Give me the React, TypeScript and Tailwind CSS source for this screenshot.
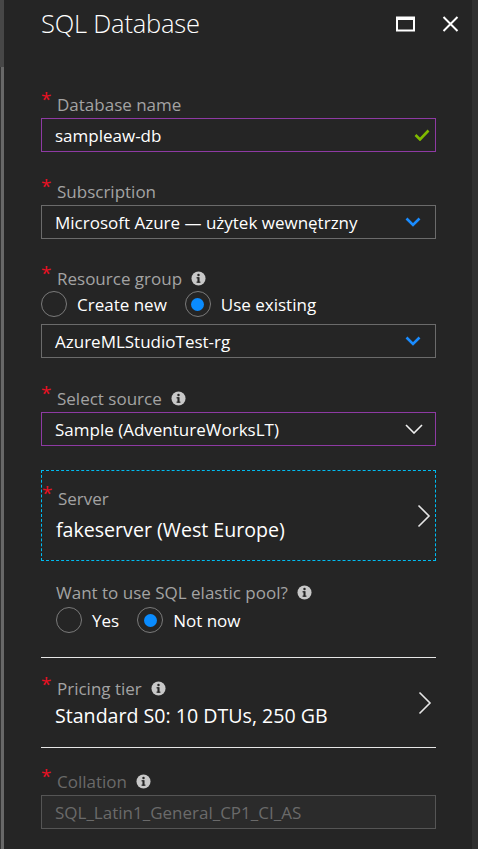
import type { ReactNode } from "react";

const font = { fontFamily: '"Open Sans", "Noto Sans", sans-serif' };

const Star = () => (
  <span className="w-[16px] shrink-0 self-start leading-none text-[19px] text-[#e81123] -mt-[3px]">*</span>
);

const Info = () => (
  <svg width="15" height="15" viewBox="0 0 16 16" className="ml-[9px] shrink-0">
    <circle cx="8" cy="8" r="7.5" fill="#c8c8c8" />
    <rect x="6.9" y="6.6" width="2.2" height="5.8" fill="#252525" />
    <rect x="5.9" y="6.6" width="2" height="1.3" fill="#252525" />
    <rect x="5.9" y="11.3" width="4.2" height="1.2" fill="#252525" />
    <circle cx="8" cy="4.3" r="1.3" fill="#252525" />
  </svg>
);

const Label = ({ children, info, dim }: { children: ReactNode; info?: boolean; dim?: boolean }) => (
  <div className="flex items-center h-[22px]">
    <Star />
    <span className={`text-[17px] leading-none ${dim ? "text-[#6a6a6a]" : "text-[#a3a3a3]"}`}>{children}</span>
    {info && <Info />}
  </div>
);

const BlueChevron = () => (
  <svg width="16" height="10" viewBox="0 0 16 10" className="mr-[1px]">
    <path d="M1.5 1.5 L8 8 L14.5 1.5" fill="none" stroke="#1a8cff" strokeWidth="2.6" />
  </svg>
);

const WhiteChevron = () => (
  <svg width="18" height="10" viewBox="0 0 18 10">
    <path d="M1 1 L9 9 L17 1" fill="none" stroke="#f0f0f0" strokeWidth="1.6" />
  </svg>
);

const RightChevron = () => (
  <svg width="14" height="24" viewBox="0 0 14 24">
    <path d="M1.5 1.5 L12 12 L1.5 22.5" fill="none" stroke="#e6e6e6" strokeWidth="1.6" />
  </svg>
);

const Radio = ({ checked, children }: { checked?: boolean; children: ReactNode }) => (
  <div className="flex items-center">
    <div className="w-[26px] h-[26px] rounded-full border border-[#7a7a7a] flex items-center justify-center">
      {checked && <div className="w-[13px] h-[13px] rounded-full bg-[#0a8cff]" />}
    </div>
    <span className="ml-[10px] text-[17px] text-white leading-none">{children}</span>
  </div>
);

const Box = ({ children, border, right, pr }: { children: ReactNode; border: string; right?: ReactNode; pr: string }) => (
  <div className={`h-[34px] border ${border} ${pr} flex items-center justify-between pl-[13px] mt-[3px]`}>
    <span className="text-[17px] text-white leading-none">{children}</span>
    {right}
  </div>
);

export default function App() {
  return (
    <div style={font} className="w-[478px] h-[849px] overflow-hidden flex bg-[#252525]">
      <div className="w-[4px] flex flex-col shrink-0">
        <div className="h-[67px] bg-[#474747]" />
        <div className="flex-1 bg-[#686868] border-l border-[#333]" />
      </div>
      <div className="flex-1 flex flex-col pl-[37px] pr-[36px]">
        <div className="flex items-center justify-between h-[46px] pt-[1px]">
          <h1 className="text-[25.5px] font-light text-white leading-none tracking-[-0.2px]">SQL Database</h1>
          <div className="flex items-center gap-[27px] -mr-[23px]">
            <svg width="19" height="16" viewBox="0 0 19 16">
              <rect x="1" y="1.5" width="17" height="13" fill="none" stroke="#fff" strokeWidth="2" />
              <rect x="1" y="1" width="17" height="3" fill="#fff" />
            </svg>
            <svg width="17" height="16" viewBox="0 0 17 16">
              <path d="M1.5 1 L15.5 15 M15.5 1 L1.5 15" stroke="#fff" strokeWidth="2" />
            </svg>
          </div>
        </div>

        <div className="mt-[47px]">
          <Label>Database name</Label>
          <Box
            border="border-[#8e3aa3]"
            pr="pr-[5px]"
            right={
              <svg width="16" height="12" viewBox="0 0 16 12">
                <path d="M1.5 6 L6 10.5 L14.5 1.5" fill="none" stroke="#7fba00" strokeWidth="2.6" />
              </svg>
            }
          >
            sampleaw-db
          </Box>
        </div>

        <div className="mt-[28px]">
          <Label>Subscription</Label>
          <Box border="border-[#6b6b6b]" pr="pr-[13px]" right={<BlueChevron />}>
            Microsoft Azure — użytek wewnętrzny
          </Box>
        </div>

        <div className="mt-[28px]">
          <Label info>Resource group</Label>
          <div className="flex items-center gap-[18px] mt-[2px] h-[26px]">
            <Radio>Create new</Radio>
            <Radio checked>Use existing</Radio>
          </div>
          <div className="mt-[7px]">
            <Box border="border-[#6b6b6b]" pr="pr-[13px]" right={<BlueChevron />}>
              AzureMLStudioTest-rg
            </Box>
          </div>
        </div>

        <div className="mt-[29px]">
          <Label info>Select source</Label>
          <Box border="border-[#8e3aa3]" pr="pr-[12px]" right={<WhiteChevron />}>
            Sample (AdventureWorksLT)
          </Box>
        </div>

        <div className="mt-[24px] h-[91px] border border-dashed border-[#00bcf2] flex items-center justify-between pr-[4px]">
          <div className="flex flex-col -mt-[4px]">
            <Label>Server</Label>
            <span className="pl-[14px] mt-[11px] text-[19.6px] text-white leading-none">fakeserver (West Europe)</span>
          </div>
          <RightChevron />
        </div>

        <div className="pl-[15px] mt-[20px]">
          <div className="flex items-center h-[22px]">
            <span className="text-[17px] text-[#a3a3a3] leading-none">Want to use SQL elastic pool?</span>
            <Info />
          </div>
          <div className="flex items-center gap-[18px] mt-[4px] h-[26px]">
            <Radio>Yes</Radio>
            <Radio checked>Not now</Radio>
          </div>
        </div>

        <div className="mt-[24px] h-px bg-[#e6e6e6]" />

        <div className="h-[89px] flex items-center justify-between pr-[4px]">
          <div className="flex flex-col -mt-[2px]">
            <Label info>Pricing tier</Label>
            <span className="pl-[14px] mt-[6px] text-[19.6px] text-white leading-none">Standard S0: 10 DTUs, 250 GB</span>
          </div>
          <RightChevron />
        </div>

        <div className="h-px bg-[#e6e6e6]" />

        <div className="mt-[22px]">
          <Label info dim>Collation</Label>
          <div className="h-[34px] border border-[#555] bg-[#2b2b2b] flex items-center pl-[13px] mt-[3px]">
            <span className="text-[17px] text-[#6a6a6a] leading-none">SQL_Latin1_General_CP1_CI_AS</span>
          </div>
        </div>
      </div>
      <div className="w-[6px] shrink-0 bg-[#303030]" />
    </div>
  );
}
